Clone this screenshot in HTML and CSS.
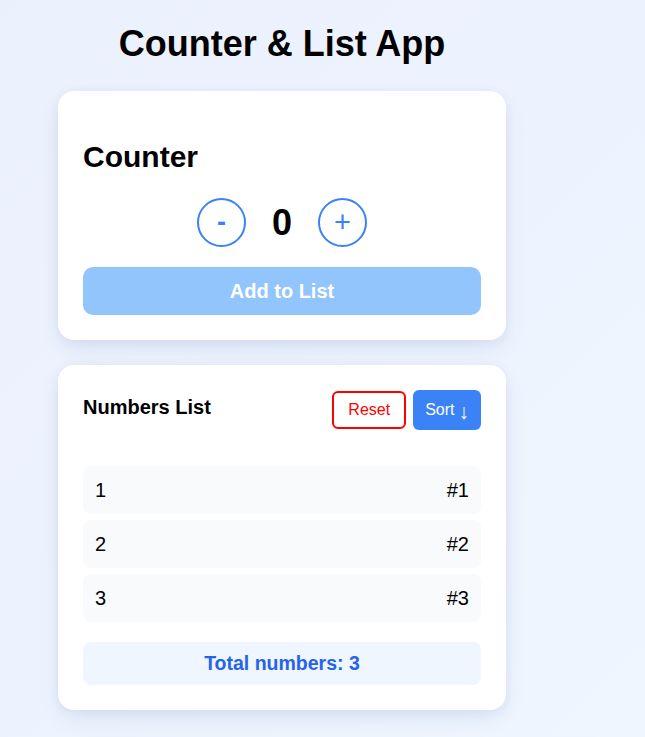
FILE: index.html
```html
<!DOCTYPE html>
<html lang="en">
<head>
<meta charset="utf-8">
<title>Counter &amp; List App</title>
<link rel="stylesheet" href="styles.css">
</head>
<body>
  <div class="app">
    <h1 class="app-title">Counter &amp; List App</h1>

    <section class="card counter-card">
      <h2 class="counter-title">Counter</h2>
      <div class="counter-row">
        <button class="circle-btn minus">-</button>
        <span class="count">0</span>
        <button class="circle-btn plus">+</button>
      </div>
      <button class="add-btn">Add to List</button>
    </section>

    <section class="card list-card">
      <div class="list-header">
        <h3 class="list-title">Numbers List</h3>
        <div class="list-actions">
          <button class="reset-btn">Reset</button>
          <button class="sort-btn">Sort <span class="arrow">↓</span></button>
        </div>
      </div>
      <ul class="num-list">
        <li class="num-item"><span>1</span><span>#1</span></li>
        <li class="num-item"><span>2</span><span>#2</span></li>
        <li class="num-item"><span>3</span><span>#3</span></li>
      </ul>
      <div class="total">Total numbers: 3</div>
    </section>
  </div>
</body>
</html>
```

FILE: styles.css
```css
* { box-sizing: border-box; }

html, body {
  margin: 0;
  min-height: 100%;
}

body {
  font-family: "Liberation Sans", Arial, sans-serif;
  background: linear-gradient(135deg, #ebf0fd 0%, #edf3fe 50%, #eff6ff 100%);
  min-height: 737px;
  color: #000;
}

.app {
  width: 448px;
  margin-left: 58px;
  padding-top: 23px;
  padding-bottom: 27px;
}

.app-title {
  margin: 0 0 26px;
  font-size: 36px;
  font-weight: bold;
  text-align: center;
  line-height: normal;
}

.card {
  background: #fff;
  border-radius: 16px;
  padding: 25px;
  box-shadow: 0 10px 24px -4px rgba(30, 58, 138, 0.1), 0 2px 12px rgba(30, 58, 138, 0.06);
}

.counter-card { margin-bottom: 25px; }

.counter-title {
  margin: 24px 0 24px;
  font-size: 30px;
  font-weight: bold;
  line-height: normal;
}

.counter-row {
  display: flex;
  justify-content: center;
  align-items: center;
  gap: 26px;
  margin-bottom: 20px;
}

.circle-btn {
  width: 49px;
  height: 49px;
  border-radius: 50%;
  border: 2px solid #3b82f6;
  background: #fff;
  color: #3b82f6;
  font-family: inherit;
  font-size: 27px;
  font-weight: bold;
  display: flex;
  align-items: center;
  justify-content: center;
  padding: 0;
}

.circle-btn.plus {
  font-size: 29px;
  font-weight: normal;
}

.count {
  font-size: 36px;
  font-weight: bold;
  line-height: 1;
}

.add-btn {
  display: block;
  width: 100%;
  height: 48px;
  border: none;
  border-radius: 10px;
  background: #93c5fd;
  color: #fff;
  font-family: inherit;
  font-size: 20px;
  font-weight: bold;
}

.list-header {
  display: flex;
  justify-content: space-between;
  align-items: flex-start;
  margin-bottom: 36px;
}

.list-title {
  margin: 3px 0 0;
  font-size: 20px;
  font-weight: bold;
  line-height: 28px;
}

.list-actions {
  display: flex;
  align-items: center;
  gap: 7px;
  height: 40px;
}

.reset-btn {
  height: 38px;
  padding: 0 14px;
  border: 2px solid #ff0000;
  border-radius: 6px;
  background: #fff;
  color: #ff0000;
  font-family: inherit;
  font-size: 16px;
}

.sort-btn {
  height: 40px;
  padding: 0 12px;
  border: none;
  border-radius: 6px;
  background: #3b82f6;
  color: #fff;
  font-family: inherit;
  font-size: 16px;
  display: flex;
  align-items: center;
  gap: 4px;
}

.arrow {
  font-size: 21px;
  line-height: 1;
  position: relative;
  top: 1px;
}

.num-list {
  list-style: none;
  margin: 0 0 20px;
  padding: 0;
  display: flex;
  flex-direction: column;
  gap: 6px;
}

.num-item {
  display: flex;
  justify-content: space-between;
  align-items: center;
  height: 48px;
  padding: 0 12px;
  background: #f8fafc;
  border-radius: 8px;
  font-size: 20px;
}

.total {
  height: 43px;
  display: flex;
  align-items: center;
  justify-content: center;
  background: #eff6ff;
  border-radius: 8px;
  color: #2563eb;
  font-size: 19.5px;
  font-weight: bold;
}
```
